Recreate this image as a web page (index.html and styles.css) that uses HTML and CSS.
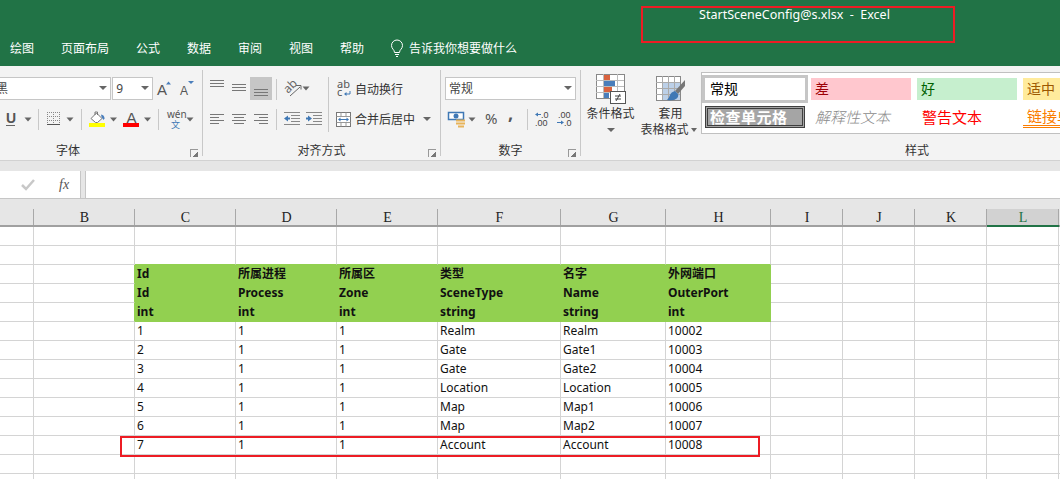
FILE: index.html
```html
<!DOCTYPE html>
<html lang="zh-CN">
<head>
  <meta charset="UTF-8">
  <title>StartSceneConfig@s.xlsx - Excel</title>
  <link rel="stylesheet" href="styles.css">
</head>
<body>
<div class="page">

  <!-- Title bar and tabs -->
  <header class="titlebar">
    <nav class="tabs">
      <span>绘图</span>
      <span>页面布局</span>
      <span>公式</span>
      <span>数据</span>
      <span>审阅</span>
      <span>视图</span>
      <span>帮助</span>
      <span class="tell-me">
        <svg width="12" height="18" viewBox="0 0 12 18" fill="none" stroke="#fff" stroke-width="1">
          <path d="M3.5 12.5C3.500 9.500 .5 9 .5 5.500a5.500 5.500 0 0 1 11 0C11.500 9 8.500 9.500 8.500 12.500z"/>
          <path d="M4 14.500h4M5 16.500h2"/>
        </svg>
        告诉我你想要做什么
      </span>
    </nav>
    <div class="title-mark">StartSceneConfig@s.xlsx  -  Excel</div>
  </header>

  <!-- Ribbon -->
  <section class="ribbon">

    <div class="group group-font">
      <div class="group-body">
        <div class="row row-top font-row">
          <div class="select select-font"><span>微软雅黑</span><i class="caret"></i></div>
          <div class="select select-size"><span>9</span><i class="caret"></i></div>
          <svg width="49" height="23" viewBox="154 77 49 23">
            <text x="158" y="95" class="glyph-a" font-size="15">A</text>
            <path d="M167 84.500l2.500-3 2.500 3z" fill="#4a7ebb"/>
            <text x="181" y="95" class="glyph-a" font-size="12">A</text>
            <path d="M189 81h6l-3 3z" fill="#4a7ebb"/>
          </svg>
        </div>
        <div class="row row-bottom font-tools">
          <svg width="38" height="24" viewBox="0 107 38 24">
            <text x="6" y="123" class="glyph-u">U</text>
            <path d="M6 125.500h9" stroke="#666" fill="none"/>
            <path d="M24.500 117.500h7l-3.500 4z" fill="#666"/>
          </svg>
          <i class="sep"></i>
          <svg width="42" height="24" viewBox="39 107 42 24">
            <path d="M47 112.500h13M47 116.500h13M47 120.500h13M47.500 112v12M53.500 112v12M59.500 112v12" stroke="#888" stroke-dasharray="1 1" fill="none"/>
            <path d="M47 124.500h13" stroke="#555" fill="none"/>
            <path d="M66.500 117.500h7l-3.500 4z" fill="#666"/>
          </svg>
          <i class="sep"></i>
          <svg width="76" height="24" viewBox="82 107 76 24">
            <path d="M91 118.500l5.500-5.500 5.500 5.500-4.500 4h-2z" fill="#fff" stroke="#777"/>
            <path d="M95 115v-3h2.500v3" fill="none" stroke="#777"/>
            <path d="M101 114.500q3.500.5 3.500 4l-1 1.500-2-3z" fill="#4a7ebb"/>
            <rect x="89" y="123" width="16" height="4" fill="#ff0"/>
            <path d="M110 117.500h7l-3.500 4z" fill="#666"/>
            <text x="126.500" y="122.500" class="glyph-a" font-size="15">A</text>
            <rect x="123" y="123" width="16" height="4" fill="#f00"/>
            <path d="M144 117.500h7l-3.500 4z" fill="#666"/>
          </svg>
          <i class="sep"></i>
          <svg width="43" height="24" viewBox="159 107 43 24">
            <text x="167" y="118" class="glyph-wen">wén</text>
            <text x="171" y="127.500" class="glyph-zh">文</text>
            <path d="M186.500 117.500h7l-3.500 4z" fill="#666"/>
          </svg>
        </div>
      </div>
      <div class="group-foot">字体<i class="launcher"></i></div>
    </div>

    <div class="group group-align">
      <div class="group-body align-body">
        <div class="align-tools">
          <div class="row row-top">
            <svg width="73" height="23" viewBox="203 77 73 23">
              <rect x="250" y="77" width="22" height="23" fill="#c6c6c6"/>
              <path d="M210 80.500h14M210 83.500h14M210 86.500h14M232 84.500h14M232 87.500h14M232 90.500h14M254 89.500h14M254 92.500h14M254 95.500h14" stroke="#777" fill="none"/>
            </svg>
            <i class="sep"></i>
            <svg width="52" height="23" viewBox="277 77 52 23">
              <text x="0" y="0" class="glyph-ab" transform="translate(288 94) rotate(-45)">ab</text>
              <path d="M290 96l10-9M296 85.500h5v4" stroke="#666" fill="none"/>
              <path d="M302.500 86.500h7l-3.500 4z" fill="#666"/>
            </svg>
          </div>
          <div class="row row-bottom">
            <svg width="73" height="24" viewBox="203 107 73 24">
              <path d="M210 114.500h14M210 117.500h9M210 120.500h14M210 123.500h9M232 114.500h14M234 117.500h10M232 120.500h14M234 123.500h10M254 114.500h14M259 117.500h9M254 120.500h14M259 123.500h9" stroke="#777" fill="none"/>
            </svg>
            <i class="sep"></i>
            <svg width="52" height="24" viewBox="277 107 52 24">
              <path d="M291 115.500h9M291 118.500h9M291 121.500h9M284 124.500h16M284 112.500h16" stroke="#888" fill="none"/>
              <path d="M284 118.500l4-3v2h2v2h-2v2z" fill="#3f78b5"/>
              <path d="M313 115.500h9M313 118.500h9M313 121.500h9M306 124.500h16M306 112.500h16" stroke="#888" fill="none"/>
              <path d="M312 118.500l-4-3v2h-2v2h2v2z" fill="#3f78b5"/>
            </svg>
          </div>
        </div>
        <div class="align-cmds">
          <div class="row row-top cmd-line">
            <svg width="14" height="18" viewBox="0 0 14 18">
              <text x="0" y="8" class="glyph-abc">ab</text>
              <text x="0" y="16" class="glyph-abc">c</text>
              <path d="M13 11v3H8" fill="none" stroke="#3f78b5"/>
              <path d="M9.500 12l-2.500 2 2.500 2z" fill="#3f78b5"/>
            </svg>
            <span>自动换行</span>
          </div>
          <div class="row row-bottom cmd-line merge-line">
            <svg width="15" height="15" viewBox="0 0 15 15">
              <rect x=".5" y=".5" width="14" height="14" fill="#fff" stroke="#777"/>
              <path d="M.5 4.500h14M.5 10.500h14M5 .5v4M10 .5v4M5 10.500v4M10 10.500v4" stroke="#999" fill="none"/>
              <path d="M3 7.500h9" stroke="#3f78b5"/>
              <path d="M4.500 5.500l-2.500 2 2.500 2zM10.500 5.500l2.500 2-2.500 2z" fill="#3f78b5"/>
            </svg>
            <span>合并后居中</span>
            <i class="caret caret-merge"></i>
          </div>
        </div>
      </div>
      <div class="group-foot">对齐方式<i class="launcher"></i></div>
    </div>

    <div class="group group-number">
      <div class="group-body">
        <div class="row row-top number-select-row">
          <div class="select select-format"><span>常规</span><i class="caret"></i></div>
        </div>
        <div class="row row-bottom">
          <svg width="86" height="24" viewBox="441 107 86 24">
            <rect x="448.500" y="112.500" width="15" height="7" fill="#fff" stroke="#3f78b5" stroke-width="1.500"/>
            <circle cx="456" cy="116" r="2.500" fill="#3f78b5"/>
            <path d="M456 120.500h9M456 123.500h9M458 126.500h6" stroke="#e8b45a" stroke-width="2" fill="none"/>
            <path d="M468.500 117.500h7l-3.500 4z" fill="#666"/>
            <text x="485" y="124" class="glyph-pct">%</text>
            <text x="508" y="120" class="glyph-comma">,</text>
          </svg>
          <i class="sep"></i>
          <svg width="52" height="24" viewBox="528 107 52 24">
            <text x="541" y="118" class="glyph-dec">.0</text>
            <text x="535" y="125.500" class="glyph-dec">.00</text>
            <path d="M541 114.500h-5" stroke="#3f78b5"/>
            <path d="M538 112.500l-3 2 3 2z" fill="#3f78b5"/>
            <text x="558" y="118" class="glyph-dec">.00</text>
            <text x="564" y="125.500" class="glyph-dec">.0</text>
            <path d="M557 122.500h5" stroke="#3f78b5"/>
            <path d="M561 120.500l3 2-3 2z" fill="#3f78b5"/>
          </svg>
        </div>
      </div>
      <div class="group-foot">数字<i class="launcher"></i></div>
    </div>

    <div class="group group-styles">
      <div class="styles-body">
        <div class="cmd cmd-cond">
          <svg width="30" height="30" viewBox="597 74 30 30">
            <rect x="597.500" y="74.500" width="28" height="24" fill="#fff" stroke="#888"/>
            <path d="M597 80.500h28M597 86.500h28M597 92.500h28M604.500 74v24M618.500 74v24" stroke="#bbb" fill="none"/>
            <rect x="605" y="75" width="6" height="5" fill="#d9633f"/>
            <rect x="605" y="81" width="11" height="5" fill="#4a7ebb"/>
            <rect x="605" y="87" width="8" height="5" fill="#d9633f"/>
            <rect x="605" y="93" width="5" height="5" fill="#4a7ebb"/>
            <rect x="611.500" y="91.500" width="15" height="12" fill="#fff" stroke="#555"/>
            <path d="M616 96h6M616 99h6M617 101l4-7" stroke="#444" fill="none"/>
          </svg>
          <span>条件格式</span>
          <i class="caret caret-cmd"></i>
        </div>
        <div class="cmd cmd-table">
          <svg width="30" height="30" viewBox="656 74 30 30">
            <rect x="656.500" y="76.500" width="24" height="24" fill="#fff" stroke="#888"/>
            <rect x="662" y="82" width="18" height="18" fill="#bcd0e8"/>
            <path d="M656 82.500h24M656 88.500h24M656 94.500h24M662.500 76v24M668.500 76v24M674.500 76v24" stroke="#aaa" fill="none"/>
            <path d="M685 80l-10 11 3 3 7-8z" fill="#777"/>
            <path d="M675 91q-4 1-5 4t-3 5q6 1 9-1t2-5z" fill="#3f78b5"/>
          </svg>
          <span>套用</span>
          <span class="cmd-wrap">表格格式<i class="caret caret-inline"></i></span>
        </div>
        <div class="gallery">
          <div class="style-cell style-normal">常规</div>
          <div class="style-cell style-bad">差</div>
          <div class="style-cell style-good">好</div>
          <div class="style-cell style-neutral">适中</div>
          <div class="style-cell style-check">检查单元格</div>
          <div class="style-cell style-note">解释性文本</div>
          <div class="style-cell style-warn">警告文本</div>
          <div class="style-cell style-link">链接单元格</div>
        </div>
      </div>
      <div class="group-foot">样式</div>
    </div>
  </section>

  <!-- Formula bar -->
  <section class="formula-bar">
    <div class="formula-btns">
      <svg width="14" height="12" viewBox="0 0 14 12"><path d="M1 6l4 4 8-9" fill="none" stroke="#c8c8c8" stroke-width="2.500"/></svg>
      <span class="fx">fx</span>
    </div>
    <div class="formula-input"></div>
  </section>

  <!-- Sheet -->
  <table class="sheet">
    <colgroup>
      <col class="c34"><col class="c101"><col class="c101"><col class="c101"><col class="c101"><col class="c123"><col class="c105"><col class="c105"><col class="c72"><col class="c72"><col class="c72"><col class="c72"><col class="c72">
    </colgroup>
    <tr>
      <th></th><th>B</th><th>C</th><th>D</th><th>E</th><th>F</th><th>G</th><th>H</th><th>I</th><th>J</th><th>K</th><th class="active">L</th><th></th>
    </tr>
    <tr><td></td><td></td><td></td><td></td><td></td><td></td><td></td><td></td><td></td><td></td><td></td><td></td><td></td></tr>
    <tr><td></td><td></td><td class="gb"></td><td class="gb"></td><td class="gb"></td><td class="gb"></td><td class="gb"></td><td class="gb"></td><td></td><td></td><td></td><td></td><td></td></tr>
    <tr class="head"><td></td><td class="gr"></td><td>Id</td><td>所属进程</td><td>所属区</td><td>类型</td><td>名字</td><td>外网端口</td><td></td><td></td><td></td><td></td><td></td></tr>
    <tr class="head"><td></td><td class="gr"></td><td>Id</td><td>Process</td><td>Zone</td><td>SceneType</td><td>Name</td><td>OuterPort</td><td></td><td></td><td></td><td></td><td></td></tr>
    <tr class="head"><td></td><td class="gr"></td><td>int</td><td>int</td><td>int</td><td>string</td><td>string</td><td>int</td><td></td><td></td><td></td><td></td><td></td></tr>
    <tr><td></td><td></td><td>1</td><td>1</td><td>1</td><td>Realm</td><td>Realm</td><td>10002</td><td></td><td></td><td></td><td></td><td></td></tr>
    <tr><td></td><td></td><td>2</td><td>1</td><td>1</td><td>Gate</td><td>Gate1</td><td>10003</td><td></td><td></td><td></td><td></td><td></td></tr>
    <tr><td></td><td></td><td>3</td><td>1</td><td>1</td><td>Gate</td><td>Gate2</td><td>10004</td><td></td><td></td><td></td><td></td><td></td></tr>
    <tr><td></td><td></td><td>4</td><td>1</td><td>1</td><td>Location</td><td>Location</td><td>10005</td><td></td><td></td><td></td><td></td><td></td></tr>
    <tr><td></td><td></td><td>5</td><td>1</td><td>1</td><td>Map</td><td>Map1</td><td>10006</td><td></td><td></td><td></td><td></td><td></td></tr>
    <tr><td></td><td></td><td>6</td><td>1</td><td>1</td><td>Map</td><td>Map2</td><td>10007</td><td></td><td></td><td></td><td></td><td></td></tr>
    <tr><td></td><td></td><td>7</td><td>1</td><td>1</td><td>Account</td><td>Account</td><td>10008</td><td></td><td></td><td></td><td></td><td></td></tr>
    <tr><td></td><td></td><td></td><td></td><td></td><td></td><td></td><td></td><td></td><td></td><td></td><td></td><td></td></tr>
    <tr><td></td><td></td><td></td><td></td><td></td><td></td><td></td><td></td><td></td><td></td><td></td><td></td><td></td></tr>
  </table>

  <!-- Red annotation drawn over the sheet -->
  <div class="row-mark"></div>
</div>
</body>
</html>
```

FILE: styles.css
```css
* {
  box-sizing: border-box;
}

html, body {
  margin: 0;
  height: 100%;
  overflow: hidden;
}

body {
  font-family: "Noto Sans", "Noto Sans CJK SC", sans-serif;
  font-size: 12px;
  color: #444;
  background: #fff;
}

.page {
  position: relative;
  width: 1060px;
  height: 479px;
  overflow: hidden;
}

svg {
  display: block;
  flex: none;
  overflow: visible;
}

/* Title bar */
.titlebar {
  position: relative;
  height: 66px;
  padding: 40px 0 0 10px;
  background: #217346;
  color: #fff;
}

.tabs {
  display: flex;
  align-items: center;
  gap: 27px;
  height: 18px;
  line-height: 18px;
  white-space: nowrap;
}

.tell-me {
  display: flex;
  align-items: center;
  gap: 6px;
}

/* red annotation box round the window title */
.title-mark {
  position: absolute;
  left: 641px;
  top: 6px;
  width: 314px;
  height: 37px;
  padding: 0 7px 0 0;
  border: 2px solid #ed1c24;
  color: #fff;
  font-size: 12.5px;
  line-height: 14px;
  text-align: center;
  white-space: pre;
}

/* Ribbon */
.ribbon {
  display: flex;
  height: 95px;
  padding: 4px 0 5px;
  background: #f3f3f3;
  border-bottom: 1px solid #d2d2d2;
}

.group {
  display: flex;
  flex-direction: column;
  flex: none;
  height: 86px;
  border-right: 1px solid #c8c8c8;
}

.group-font {
  width: 269px;
  margin-left: -66px;
}

.group-align {
  width: 238px;
}

.group-number {
  width: 140px;
}

.group-styles {
  width: 672px;
  border-right: 0;
}

.group-body {
  padding-top: 7px;
}

.group-foot {
  position: relative;
  margin-top: auto;
  margin-bottom: -1px;
  height: 12px;
  line-height: 12px;
  text-align: center;
  color: #333;
}

.launcher {
  position: absolute;
  right: 4px;
  bottom: 0;
  width: 8px;
  height: 8px;
  border-left: 1px solid #999;
  border-top: 1px solid #999;
  background: linear-gradient(135deg, transparent 60%, #777 60%);
}

.row {
  display: flex;
  align-items: flex-start;
}

.row-top {
  height: 23px;
}

.row-bottom {
  height: 24px;
  margin-top: 7px;
}

.sep {
  flex: none;
  width: 1px;
  height: 21px;
  margin-top: 2px;
  background: #c8c8c8;
}

.caret {
  flex: none;
  width: 0;
  height: 0;
  border-left: 4px solid transparent;
  border-right: 4px solid transparent;
  border-top: 4px solid #666;
}

.select {
  display: flex;
  align-items: center;
  justify-content: space-between;
  height: 23px;
  padding: 0 3px 1px;
  background: #fff;
  border: 1px solid #c6c6c6;
}

.font-row {
  padding-left: 22px;
}

/* the group runs off the left edge of the window */
.font-tools {
  padding-left: 66px;
}

.select-font {
  width: 156px;
}

.select-size {
  width: 41px;
  margin-left: 1px;
}

.number-select-row {
  padding-left: 4px;
}

.select-format {
  width: 131px;
}

.glyph-a {
  font-family: "Liberation Sans", sans-serif;
  fill: #555;
}

.glyph-u {
  font-family: "Liberation Sans", sans-serif;
  font-size: 14px;
  font-weight: bold;
  fill: #555;
}

.glyph-wen {
  font-family: "Noto Sans", sans-serif;
  font-size: 10px;
  fill: #555;
}

.glyph-zh {
  font-family: "Noto Sans CJK SC", sans-serif;
  font-size: 9px;
  fill: #3f78b5;
}

.glyph-ab {
  font-family: "Noto Sans", sans-serif;
  font-size: 12px;
  fill: #666;
}

.glyph-abc {
  font-family: "Noto Sans", sans-serif;
  font-size: 11px;
  fill: #555;
}

.glyph-pct {
  font-family: "Noto Sans", sans-serif;
  font-size: 15px;
  fill: #555;
}

.glyph-comma {
  font-family: "Noto Sans", sans-serif;
  font-size: 18px;
  font-weight: bold;
  fill: #555;
}

.glyph-dec {
  font-family: "Liberation Sans", sans-serif;
  font-size: 9px;
  fill: #444;
}

/* Alignment group */
.align-body {
  display: flex;
}

.align-tools {
  width: 126px;
  height: 55px;
  border-right: 1px solid #c8c8c8;
  flex: none;
}

.align-cmds {
  flex: 1;
  color: #333;
}

.cmd-line {
  align-items: center;
  gap: 4px;
  padding-left: 8px;
}

.merge-line {
  padding-left: 7px;
}

.caret-merge {
  margin-left: 4px;
}

/* Styles group */
.styles-body {
  display: flex;
  align-items: flex-start;
}

.cmd {
  display: flex;
  flex-direction: column;
  align-items: center;
  flex: none;
  padding-top: 4px;
  height: 68px;
  line-height: 16px;
  color: #333;
  white-space: nowrap;
}

.cmd svg {
  margin-bottom: 2px;
}

.cmd-cond {
  width: 59px;
}

.cmd-table {
  width: 61px;
}

.caret-cmd {
  margin-top: 6px;
}

.cmd-wrap {
  display: flex;
  align-items: center;
  gap: 2px;
  margin-left: -4px;
}

.caret-inline {
  border-left-width: 3px;
  border-right-width: 3px;
}

.gallery {
  display: grid;
  grid-template-columns: 109px 106px 106px 106px;
  grid-template-rows: 31px 28px;
  flex: none;
  width: 470px;
  height: 62px;
  margin-top: 2px;
  padding-top: 2px;
  background: #fff;
  border: 1px solid #c0c0c0;
  font-size: 14px;
  white-space: nowrap;
  overflow: hidden;
}

.style-cell {
  height: 22px;
  line-height: 22px;
  margin: 3px 6px 0 0;
  padding-left: 4px;
}

.style-normal {
  width: 106px;
  height: 28px;
  line-height: 22px;
  margin: 0;
  padding-left: 5px;
  border: 3px solid #c6c6c6;
  color: #000;
}

.style-bad {
  background: #ffc7ce;
  color: #9c0006;
}

.style-good {
  background: #c6efce;
  color: #006100;
}

.style-neutral {
  background: #ffeb9c;
  color: #9c5700;
}

.style-check {
  width: 100px;
  margin: 0 0 0 3px;
  padding-left: 2px;
  line-height: 16px;
  border: 3px double #3f3f3f;
  background: #a5a5a5;
  color: #fff;
  font-size: 15px;
  font-weight: bold;
  letter-spacing: .5px;
}

.style-note {
  margin-top: 0;
  font-size: 15px;
  font-style: italic;
  font-weight: 300;
  color: #8a8a8a;
}

.style-warn {
  margin-top: 0;
  padding-left: 5px;
  font-size: 15px;
  color: #f00;
}

.style-link {
  margin-top: 0;
  padding-left: 4px;
  border-bottom: 3px double #fa7d00;
  font-size: 15px;
  line-height: 20px;
  color: #fa7d00;
}

/* Formula bar */
.formula-bar {
  display: flex;
  height: 38px;
  padding-top: 10px;
  background: #e6e6e6;
  border-bottom: 1px solid #c6c6c6;
}

.formula-btns {
  display: flex;
  align-items: center;
  gap: 24px;
  width: 81px;
  padding-left: 21px;
  background: #fff;
  border-right: 1px solid #c6c6c6;
}

.fx {
  font-family: "Liberation Serif", serif;
  font-size: 14px;
  font-style: italic;
  color: #555;
}

.formula-input {
  flex: 1;
  margin-left: 4px;
  background: #fff;
  border-left: 1px solid #c6c6c6;
}

/* Sheet */
.sheet {
  table-layout: fixed;
  width: 1117px;
  border-collapse: separate;
  border-spacing: 0;
}

.c34 { width: 34px; }
.c72 { width: 72px; }
.c101 { width: 101px; }
.c105 { width: 105px; }
.c123 { width: 123px; }

.sheet th {
  position: relative;
  height: 28px;
  padding: 11px 0 0;
  background: #e6e6e6;
  border-bottom: 2px solid #a0a0a0;
  font-family: "Liberation Serif", serif;
  font-size: 14px;
  font-weight: normal;
  line-height: 15px;
  color: #222;
  text-align: center;
}

.sheet th::after {
  content: "";
  position: absolute;
  right: 0;
  top: 10px;
  bottom: 0;
  width: 1px;
  background: #a8a8a8;
}

.sheet th.active {
  background: linear-gradient(#e6e6e6 10px, #d2d2d2 10px);
  border-bottom-color: #217346;
  color: #217346;
}

.sheet td {
  height: 19px;
  padding: 0 0 0 2px;
  border-right: 1px solid #d4d4d4;
  border-bottom: 1px solid #d4d4d4;
  line-height: 18px;
  color: #111;
  white-space: nowrap;
  overflow: hidden;
}

/* green band for the header rows */
.sheet td.gb {
  border-bottom-color: #92d050;
}

.sheet td.gr {
  border-right-color: #92d050;
}

.head td:nth-child(n+3):nth-child(-n+8) {
  background: #92d050;
  border-color: #92d050;
  color: #111;
  font-weight: bold;
}

.row-mark {
  position: absolute;
  left: 120px;
  top: 436px;
  width: 640px;
  height: 21px;
  border: 2px solid #ed1c24;
}
```
